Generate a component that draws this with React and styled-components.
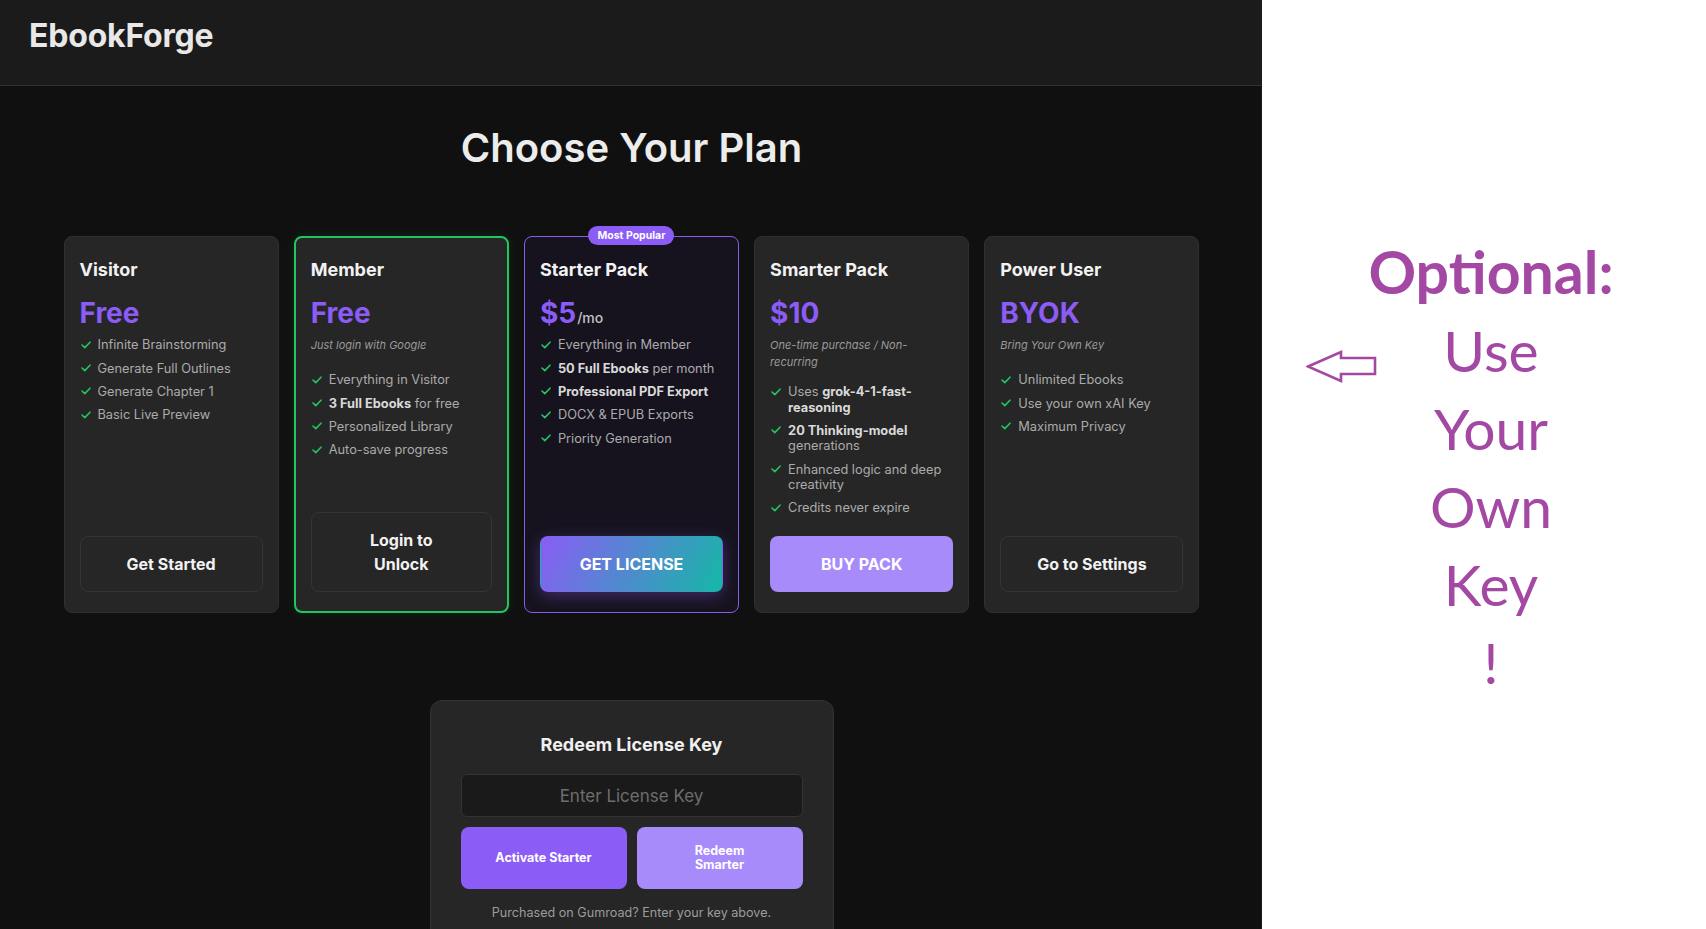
import React from "react";
import styled, { createGlobalStyle, css } from "styled-components";

const Global = createGlobalStyle`
  * { box-sizing: border-box; }
  html, body { margin: 0; padding: 0; }
  body { background: #ffffff; font-family: Inter, "Noto Sans", sans-serif; }
`;

const Shell = styled.div`
  display: flex;
  min-height: 100vh;
  height: 929px;
  overflow: hidden;
`;

const AppPane = styled.div`
  width: 1261px;
  flex: none;
  background: #101010;
  color: #eeeeee;
  display: flex;
  flex-direction: column;
`;

const Header = styled.header`
  height: 86px;
  padding: 17px 29px 0;
  background: #1b1b1b;
  border-bottom: 1px solid #333333;
  flex: none;
`;

const Logo = styled.div`
  font-size: 32px;
  font-weight: 700;
  line-height: 1.2;
  color: #e8e8e8;
  letter-spacing: -0.2px;
`;

const Main = styled.main`
  padding: 38px 0 0 2px;
  display: flex;
  flex-direction: column;
  align-items: center;
`;

const PageTitle = styled.h1`
  margin: 0 0 64px;
  font-size: 40px;
  line-height: 1.2;
  font-weight: 600;
  color: #ececec;
`;

const Grid = styled.div`
  width: 1136px;
  display: grid;
  grid-template-columns: repeat(5, 1fr);
  gap: 15px;
`;

const Card = styled.div`
  position: relative;
  display: flex;
  flex-direction: column;
  padding: 22px 15px 20px;
  border-radius: 8px;
  background: #262626;
  border: 1px solid #303030;
  ${(p) =>
    p.$variant === "member" &&
    css`
      border: 2px solid #22c55e;
      padding: 21px 15px 19px;
      box-shadow: 0 0 12px rgba(34, 197, 94, 0.12);
    `}
  ${(p) =>
    p.$variant === "popular" &&
    css`
      background: #16131e;
      border: 1px solid #8360e8;
    `}
`;

const Badge = styled.span`
  position: absolute;
  top: -11px;
  left: 50%;
  transform: translateX(-50%);
  background: #8b5cf6;
  color: #fff;
  font-size: 10.5px;
  font-weight: 700;
  padding: 3px 9px;
  border-radius: 999px;
  white-space: nowrap;
  line-height: 13px;
`;

const PlanName = styled.h3`
  margin: 0;
  font-size: 18px;
  line-height: 1.2;
  font-weight: 700;
  color: #f2f2f2;
`;

const Price = styled.div`
  margin: 16px 0 7px;
  font-size: 28px;
  line-height: 1.2;
  font-weight: 700;
  color: #8b5cf6;
  display: flex;
  align-items: baseline;
`;

const Per = styled.span`
  font-size: 14px;
  font-weight: 500;
  color: #c4c4c4;
  margin-left: 1px;
`;

const Sub = styled.p`
  margin: 0 0 13px;
  min-height: 22px;
  font-size: 11px;
  line-height: 1.55;
  font-style: italic;
  color: #9a9a9a;
`;

const Features = styled.ul`
  list-style: none;
  margin: 0 0 20px;
  padding: 0;
  display: flex;
  flex-direction: column;
  gap: 8px;
`;

const Feature = styled.li`
  display: flex;
  align-items: flex-start;
  gap: 7px;
  font-size: 12.8px;
  line-height: 1.2;
  color: #ababab;
  b { color: #d9d9d9; font-weight: 700; }
`;

const CheckBox = styled.span`
  flex: none;
  width: 11px;
  height: 15px;
  display: flex;
  align-items: center;
  justify-content: flex-end;
`;

const PlanButton = styled.button`
  margin-top: auto;
  width: 100%;
  padding: 15px 8px;
  border-radius: 8px;
  font-family: inherit;
  font-size: 16px;
  line-height: 24px;
  font-weight: 700;
  cursor: pointer;
  border: 1px solid #353535;
  background: #262626;
  color: #f2f2f2;
  ${(p) =>
    p.$kind === "gradient" &&
    css`
      border-color: transparent;
      background: linear-gradient(120deg, #8b5cf6 0%, #14b8a6 100%);
      color: #fff;
      text-transform: uppercase;
      box-shadow: 0 4px 16px rgba(139, 92, 246, 0.35);
    `}
  ${(p) =>
    p.$kind === "soft" &&
    css`
      border-color: transparent;
      background: #a78bfa;
      color: #fff;
      text-transform: uppercase;
    `}
`;

const Redeem = styled.section`
  margin-top: 87px;
  width: 404px;
  background: #262626;
  border: 1px solid #333333;
  border-radius: 12px;
  padding: 33px 30px 40px;
  display: flex;
  flex-direction: column;
  align-items: stretch;
`;

const RedeemTitle = styled.h3`
  margin: 0 0 19px;
  text-align: center;
  font-size: 18px;
  line-height: 1.2;
  font-weight: 700;
  color: #f0f0f0;
`;

const KeyInput = styled.input`
  height: 43px;
  width: 100%;
  background: #1a1a1a;
  border: 1px solid #333;
  border-radius: 6px;
  color: #ddd;
  text-align: center;
  font-family: inherit;
  font-size: 17px;
  &::placeholder { color: #6e6e6e; }
  outline: none;
`;

const ButtonRow = styled.div`
  margin-top: 10px;
  display: grid;
  grid-template-columns: 1fr 1fr;
  gap: 10px;
`;

const RedeemButton = styled.button`
  border: none;
  border-radius: 8px;
  padding: 16px 10px;
  min-height: 62px;
  font-family: inherit;
  font-size: 12.5px;
  line-height: 14.5px;
  font-weight: 700;
  color: #fff;
  background: ${(p) => (p.$soft ? "#a78bfa" : "#8b5cf6")};
  cursor: pointer;
`;

const Note = styled.p`
  margin: 16px 0 0;
  text-align: center;
  font-size: 12.6px;
  color: #9c9c9c;
`;

const NotePane = styled.aside`
  flex: 1;
  position: relative;
  background: #ffffff;
  border-left: 1px solid #1a1a1a;
  padding: 233px 0 0 14px;
  display: flex;
  flex-direction: column;
  align-items: center;
`;

const NoteLine = styled.div`
  font-family: Lato, "Open Sans", sans-serif;
  font-size: ${(p) => (p.$strong ? "59px" : "57px")};
  font-weight: ${(p) => (p.$strong ? 700 : 400)};
  line-height: 78px;
  color: #a349a4;
  white-space: nowrap;
`;

const ArrowMark = styled.svg`
  position: absolute;
  left: 44px;
  top: 349px;
`;

const Check = () => (
  <CheckBox>
    <svg width="10" height="8" viewBox="0 0 10 8" fill="none">
      <polyline points="1,4 3.8,6.6 9,1.2" stroke="#22c55e" strokeWidth="1.6" strokeLinecap="round" strokeLinejoin="round" />
    </svg>
  </CheckBox>
);

const plans = [
  {
    name: "Visitor",
    price: "Free",
    features: ["Infinite Brainstorming", "Generate Full Outlines", "Generate Chapter 1", "Basic Live Preview"],
    button: "Get Started",
  },
  {
    name: "Member",
    price: "Free",
    variant: "member",
    sub: "Just login with Google",
    features: ["Everything in Visitor", <><b>3 Full Ebooks</b> for free</>, "Personalized Library", "Auto-save progress"],
    button: <>Login to<br />Unlock</>,
  },
  {
    name: "Starter Pack",
    price: "$5",
    per: "/mo",
    variant: "popular",
    badge: "Most Popular",
    features: [
      "Everything in Member",
      <><b>50 Full Ebooks</b> per month</>,
      <b>Professional PDF Export</b>,
      "DOCX & EPUB Exports",
      "Priority Generation",
    ],
    button: "Get License",
    kind: "gradient",
  },
  {
    name: "Smarter Pack",
    price: "$10",
    sub: "One-time purchase / Non-recurring",
    features: [
      <>Uses <b>grok-4-1-fast-reasoning</b></>,
      <><b>20 Thinking-model</b> generations</>,
      "Enhanced logic and deep creativity",
      "Credits never expire",
    ],
    button: "Buy Pack",
    kind: "soft",
  },
  {
    name: "Power User",
    price: "BYOK",
    sub: "Bring Your Own Key",
    features: ["Unlimited Ebooks", "Use your own xAI Key", "Maximum Privacy"],
    button: "Go to Settings",
  },
];

export default function App() {
  return (
    <>
      <Global />
      <Shell>
        <AppPane>
          <Header>
            <Logo>EbookForge</Logo>
          </Header>
          <Main>
            <PageTitle>Choose Your Plan</PageTitle>
            <Grid>
              {plans.map((p) => (
                <Card key={p.name} $variant={p.variant}>
                  {p.badge && <Badge>{p.badge}</Badge>}
                  <PlanName>{p.name}</PlanName>
                  <Price>
                    {p.price}
                    {p.per && <Per>{p.per}</Per>}
                  </Price>
                  {p.sub && <Sub>{p.sub}</Sub>}
                  <Features>
                    {p.features.map((f, i) => (
                      <Feature key={i}>
                        <Check />
                        <span>{f}</span>
                      </Feature>
                    ))}
                  </Features>
                  <PlanButton $kind={p.kind}>{p.button}</PlanButton>
                </Card>
              ))}
            </Grid>
            <Redeem>
              <RedeemTitle>Redeem License Key</RedeemTitle>
              <KeyInput placeholder="Enter License Key" />
              <ButtonRow>
                <RedeemButton>Activate Starter</RedeemButton>
                <RedeemButton $soft>
                  Redeem
                  <br />
                  Smarter
                </RedeemButton>
              </ButtonRow>
              <Note>Purchased on Gumroad? Enter your key above.</Note>
            </Redeem>
          </Main>
        </AppPane>
        <NotePane>
          <ArrowMark width="72" height="36" viewBox="0 0 72 36">
            <polygon
              points="2,17.5 35,3 35,9 69,9 69,25 35,25 35,32"
              fill="none"
              stroke="#a349a4"
              strokeWidth="2.6"
              strokeLinejoin="miter"
            />
          </ArrowMark>
          <NoteLine $strong>Optional:</NoteLine>
          <NoteLine>Use</NoteLine>
          <NoteLine>Your</NoteLine>
          <NoteLine>Own</NoteLine>
          <NoteLine>Key</NoteLine>
          <NoteLine>!</NoteLine>
        </NotePane>
      </Shell>
    </>
  );
}
